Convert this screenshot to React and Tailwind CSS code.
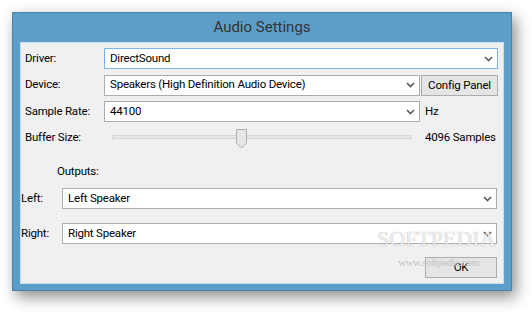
function Chevron() {
  return (
    <svg width="9" height="6" viewBox="0 0 9 6" className="shrink-0">
      <polyline points="1,1 4.5,4.5 8,1" fill="none" stroke="#5a5a5a" strokeWidth="1.6" />
    </svg>
  );
}

function Select({ value, className = '', focused = false }) {
  return (
    <div
      className={`h-[21px] flex items-center justify-between pl-[5px] pr-[4px] bg-white border ${
        focused ? 'border-[#7eb4ea]' : 'border-[#acacac]'
      } ${className}`}
    >
      <span className="truncate">{value}</span>
      <Chevron />
    </div>
  );
}

function Button({ label, className = '' }) {
  return (
    <div
      className={`h-[21px] flex items-center justify-center bg-[#e5e5e5] border border-[#adadad] ${className}`}
    >
      {label}
    </div>
  );
}

function Slider() {
  return (
    <div className="relative w-[299px] h-[22px] ml-[8px]">
      <div className="absolute left-0 right-0 top-[8px] h-[4px] border border-[#d6d6d6] bg-[#e7e7e7]" />
      <svg width="11" height="20" viewBox="0 0 11 20" className="absolute left-[124px] top-[2px]">
        <polygon points="0.5,0.5 10.5,0.5 10.5,14 5.5,19 0.5,14" fill="#e6e6e6" stroke="#adadad" />
      </svg>
    </div>
  );
}

export default function App() {
  return (
    <div className="w-[532px] h-[312px] bg-white pl-3 pt-3 text-[11.5px] text-[#000] font-['Roboto',sans-serif] tracking-[-0.2px]">
      <div className="w-[500px] h-[279px] bg-[#5d9ec9] border border-[#4b82ab] shadow-[4px_6px_14px_rgba(0,0,0,0.45)] flex flex-col">
        <div className="h-[29px] flex items-center justify-center text-[15px] tracking-normal text-[#333]">
          Audio Settings
        </div>
        <div className="relative mx-[7px] mb-[6px] flex-1 bg-[#f0f0f0] border border-[#c9dbea] flex flex-col">
          <div className="flex items-center mt-[5px]">
            <div className="w-[83px] pl-[4px]">Driver:</div>
            <Select value="DirectSound" className="w-[394px]" focused />
          </div>

          <div className="flex items-center mt-[5px]">
            <div className="w-[83px] pl-[4px]">Device:</div>
            <Select value="Speakers (High Definition Audio Device)" className="w-[316px]" />
            <Button label="Config Panel" className="w-[77px] ml-[1px] mt-[1px]" />
          </div>

          <div className="flex items-center mt-[5px]">
            <div className="w-[83px] pl-[4px]">Sample Rate:</div>
            <Select value="44100" className="w-[316px]" />
            <div className="ml-[5px]">Hz</div>
          </div>

          <div className="flex items-center mt-[5px]">
            <div className="w-[83px] pl-[4px]">Buffer Size:</div>
            <Slider />
            <div className="ml-[14px]">4096 Samples</div>
          </div>

          <div className="pl-[36px] mt-[14px] h-[16px] leading-[16px]">Outputs:</div>

          <div className="flex items-center mt-[9px]">
            <div className="w-[41px]">Left:</div>
            <Select value="Left Speaker" className="w-[435px]" />
          </div>

          <div className="flex items-center mt-[14px]">
            <div className="w-[41px]">Right:</div>
            <Select value="Right Speaker" className="w-[435px]" />
          </div>

          <div className="flex justify-end mt-[13px] pr-[6px]">
            <Button label="OK" className="w-[72px]" />
          </div>

          <div className="absolute left-[356px] top-[185px] leading-none text-[22px] tracking-normal font-['Liberation_Serif',serif] text-white/80 [text-shadow:0_0_1px_#9a9a9a] pointer-events-none">
            SOFTPEDIA
          </div>
          <div className="absolute left-[377px] top-[214px] leading-none text-[11px] tracking-[-0.4px] font-['Liberation_Serif',serif] text-[#c4c4c4] pointer-events-none">
            www.softpedia.com
          </div>
        </div>
      </div>
    </div>
  );
}
